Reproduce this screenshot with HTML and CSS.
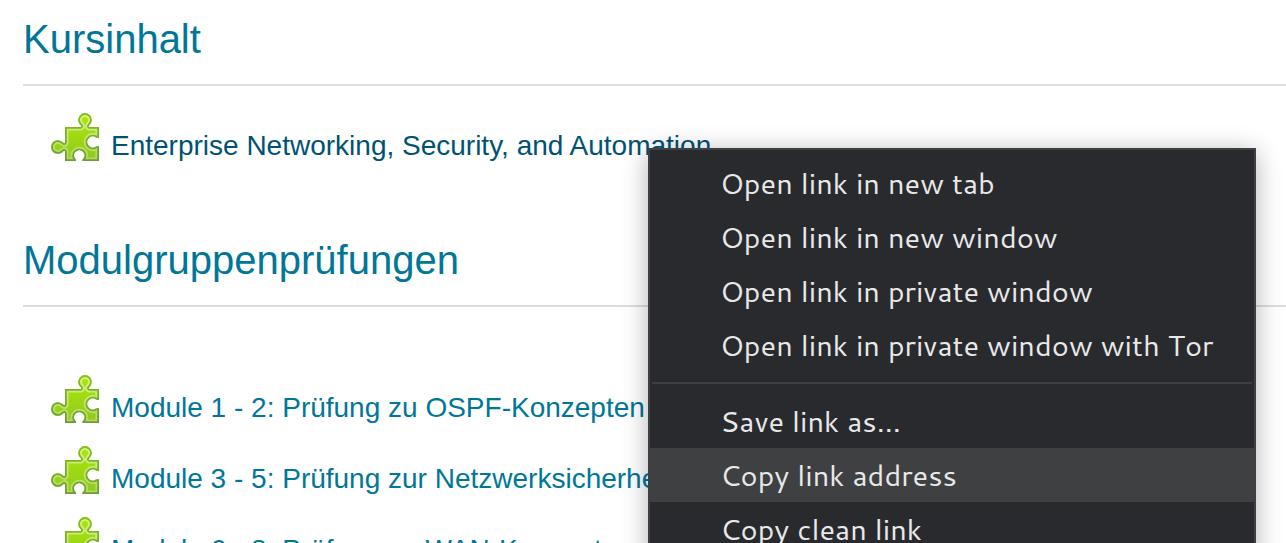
FILE: index.html
```html
<!DOCTYPE html>
<html lang="de">
<head>
<meta charset="utf-8">
<title>Kursinhalt</title>
<link rel="stylesheet" href="styles.css">
</head>
<body>
<svg class="defs" aria-hidden="true">
  <defs>
    <linearGradient id="fill" x1="0" y1="0" x2="0" y2="1"><stop offset="0" stop-color="#aee80a"/><stop offset="1" stop-color="#8fc91a"/></linearGradient>
    <linearGradient id="edge" x1="0" y1="0" x2="0" y2="1"><stop offset="0" stop-color="#86c01a"/><stop offset="1" stop-color="#6f9c35"/></linearGradient>
    <linearGradient id="shine" x1="0" y1="0" x2="0" y2="1"><stop offset="0" stop-color="#d8f78c"/><stop offset="1" stop-color="#acd860"/></linearGradient>
    <path id="piece" d="M14 14H29.500Q31 13.500 29.500 12A6.800 6.800 0 1 1 38.500 12Q37 13.500 38.500 14H48V25Q46.500 25 45 24.500A5.500 5.500 0 1 0 45 33.500Q46.500 33 48 33V48H31.500Q31 46.500 32.500 45.500A5.200 5.200 0 1 0 24 45.500Q25.500 46.500 25 48H14V38.500Q13.500 37 12 38.500A6.800 6.800 0 1 1 12 29.500Q13.500 31 14 29.500Z"/>
    <clipPath id="inside"><use href="#piece"/></clipPath>
    <symbol id="puzzle" viewBox="0 0 48 48">
      <g clip-path="url(#inside)">
        <use href="#piece" fill="url(#fill)"/>
        <use href="#piece" fill="none" stroke="url(#shine)" stroke-width="7.200"/>
        <use href="#piece" fill="none" stroke="url(#edge)" stroke-width="3.600"/>
      </g>
    </symbol>
  </defs>
</svg>
<main class="course">
  <section class="section">
    <h2 class="heading">Kursinhalt</h2>
    <ul class="activities">
      <li class="activity"><a class="link link-active" href="#"><svg class="icon" aria-hidden="true"><use href="#puzzle"/></svg><span>Enterprise Networking, Security, and Automation</span></a></li>
    </ul>
  </section>
  <section class="section section-exams">
    <h2 class="heading">Modulgruppenprüfungen</h2>
    <ul class="activities">
      <li class="activity"><a class="link" href="#"><svg class="icon" aria-hidden="true"><use href="#puzzle"/></svg><span>Module 1 - 2: Prüfung zu OSPF-Konzepten</span></a></li>
      <li class="activity"><a class="link" href="#"><svg class="icon" aria-hidden="true"><use href="#puzzle"/></svg><span>Module 3 - 5: Prüfung zur Netzwerksicherheit</span></a></li>
      <li class="activity"><a class="link" href="#"><svg class="icon" aria-hidden="true"><use href="#puzzle"/></svg><span>Module 6 - 8: Prüfung zu WAN-Konzepten</span></a></li>
    </ul>
  </section>
</main>
<div class="menu" role="menu">
  <button class="item" role="menuitem">Open link in new tab</button>
  <button class="item" role="menuitem">Open link in new window</button>
  <button class="item" role="menuitem">Open link in private window</button>
  <button class="item" role="menuitem">Open link in private window with Tor</button>
  <hr class="separator">
  <button class="item" role="menuitem">Save link as…</button>
  <button class="item item-current" role="menuitem">Copy link address</button>
  <button class="item" role="menuitem">Copy clean link</button>
</div>
</body>
</html>
```
FILE: styles.css
```css
* { box-sizing: border-box; }

html { height: 100%; overflow: hidden; }

body {
  position: relative;
  height: 100%;
  margin: 0;
  overflow: hidden;
  background: #fff;
  font-family: "Liberation Sans", Arial, sans-serif;
  color: #007698;
}

.defs { position: absolute; width: 0; height: 0; }

.course { padding: 16px 0 0 23px; }

.heading {
  margin: 0;
  padding-bottom: 22px;
  border-bottom: 2px solid #ddd;
  font-size: 40px;
  font-weight: 400;
  line-height: 46px;
}

.activities {
  display: flex;
  flex-direction: column;
  gap: 23px;
  margin: 0;
  padding: 27px 0 0 28px;
  list-style: none;
}

.section-exams { padding-top: 76px; }
.section-exams .activities { padding-top: 68px; }

.link {
  display: flex;
  align-items: flex-end;
  gap: 12px;
  width: max-content;
  color: #007698;
  font-size: 28px;
  line-height: 30px;
  text-decoration: none;
}

.link-active { color: #005273; }

.icon { width: 48px; height: 48px; }

.menu {
  position: absolute;
  top: 148px;
  left: 648px;
  width: 608px;
  padding: 6px 0;
  border: 2px solid #3e4043;
  background: #292a2e;
  box-shadow: 0 4px 24px rgba(0, 0, 0, 0.3);
}

.item {
  display: block;
  width: 100%;
  padding: 0 40px 0 70px;
  border: 0;
  background: transparent;
  color: #e8e8ea;
  font-family: Cantarell, "Noto Sans", sans-serif;
  font-size: 29px;
  line-height: 54px;
  text-align: left;
  white-space: nowrap;
}

.item-current { background: #3f4042; }

.separator {
  height: 2px;
  margin: 10px 2px;
  border: 0;
  background: #3e3f42;
}
```
